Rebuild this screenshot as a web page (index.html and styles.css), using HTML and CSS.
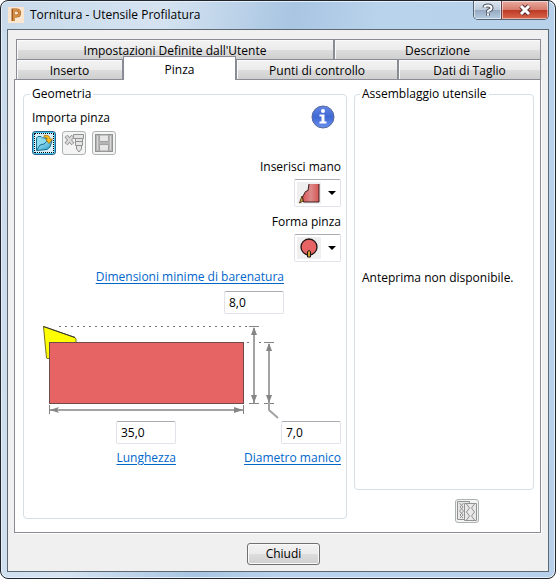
FILE: index.html
```html
<!DOCTYPE html>
<html lang="it">
<head>
    <meta charset="UTF-8">
    <meta name="viewport" content="width=device-width, initial-scale=1.0">
    <title>Tornitura - Utensile Profilatura</title>
    <link rel="stylesheet" href="styles.css">
</head>
<body>
    <div class="window">
        <header class="titlebar">
            <svg class="app-icon" width="16" height="16" viewBox="0 0 16 16" aria-hidden="true">
                <rect width="16" height="16" fill="#fde6d0"/>
                <path d="M5 14V3H8.500Q11.500 3 11.500 6T8.500 9H6" fill="none" stroke="#9a5a20" stroke-width="3"/>
                <path d="M6 14V3H8.500Q11.500 3 11.500 6T8.500 9H7" fill="none" stroke="#d58c40" stroke-width="2"/>
            </svg>
            <h1 class="title">Tornitura - Utensile Profilatura</h1>
            <div class="window-buttons">
                <button class="win-btn help" aria-label="Guida">
                    <svg width="12" height="14" viewBox="0 0 12 14">
                        <path d="M2.500 4.500Q2.500 2.500 6 2.500T9.500 5Q9.500 6.500 7.500 7.200T6 9.200M6 10.500V12.500" fill="none" stroke="#4b5563" stroke-width="4"/>
                        <path d="M2.500 4.500Q2.500 2.500 6 2.500T9.500 5Q9.500 6.500 7.500 7.200T6 9.200M6 10.500V12.500" fill="none" stroke="#fff" stroke-width="2"/>
                    </svg>
                </button>
                <button class="win-btn close" aria-label="Chiudi finestra">
                    <svg width="14" height="12" viewBox="0 0 14 12">
                        <path d="M3 2L11 10M11 2L3 10" stroke="#5a3038" stroke-width="5"/>
                        <path d="M3 2L11 10M11 2L3 10" stroke="#fff" stroke-width="3"/>
                    </svg>
                </button>
            </div>
        </header>

        <main class="client">
            <div class="tabs" role="tablist">
                <div class="tab-row tab-row-back">
                    <button class="tab" role="tab">Impostazioni Definite dall'Utente</button>
                    <button class="tab" role="tab">Descrizione</button>
                </div>
                <div class="tab-row tab-row-front">
                    <button class="tab" role="tab">Inserto</button>
                    <button class="tab active" role="tab" aria-selected="true">Pinza</button>
                    <button class="tab" role="tab">Punti di controllo</button>
                    <button class="tab" role="tab">Dati di Taglio</button>
                </div>
            </div>

            <div class="panel" role="tabpanel">
                <fieldset class="group geometry">
                    <legend>Geometria</legend>
                    <div class="import">
                        <div class="import-left">
                            <span>Importa pinza</span>
                            <div class="toolbar">
                                <button class="tool focused" aria-label="Apri">
                                    <svg width="20" height="20" viewBox="0 0 20 20">
                                        <defs>
                                            <linearGradient id="folder" x1="0" y1="0" x2="1" y2="1">
                                                <stop offset="0" stop-color="#c8f1fb"/>
                                                <stop offset="1" stop-color="#1b9cc8"/>
                                            </linearGradient>
                                        </defs>
                                        <path d="M2.500 17V5L4 3.500H7L8.500 5H12L13 8V16Z" fill="#8fdcf2" stroke="#176f91"/>
                                        <path d="M2.500 17.500L6 12L10 11L12.500 8.500L18 7.500L16 14L13 16.500Z" fill="url(#folder)" stroke="#176f91"/>
                                        <path d="M10 2.500Q16 1.500 16 6H18.500L15 10.500L11.500 6H13.500Q13.500 4 10 4Z" fill="#fbbd1d" stroke="#a66f00" stroke-width=".7"/>
                                    </svg>
                                </button>
                                <button class="tool" aria-label="Elimina" disabled>
                                    <svg width="20" height="20" viewBox="0 0 20 20">
                                        <path d="M2 3L9 11M9 3L2 11" stroke="#979797" stroke-width="4"/>
                                        <path d="M2.500 3.500L8.500 10.500M8.500 3.500L2.500 10.500" stroke="#ddd" stroke-width="2"/>
                                        <path d="M9.500 1.500H19.500V5.500H9.500ZM11.500 5.500H18.500V8.500H11.500ZM11.500 8.500H18.500V12.500H11.500ZM12.500 12.500H17.500V16L15 19L12.500 16Z" fill="#e4e4e4" stroke="#929292"/>
                                    </svg>
                                </button>
                                <button class="tool" aria-label="Salva" disabled>
                                    <svg width="20" height="20" viewBox="0 0 20 20">
                                        <rect x="1.500" y="1.500" width="17" height="17" fill="#b5b5b5" stroke="#929292"/>
                                        <path d="M5.500 2H14.500V8.500H5.500ZM5.500 11.500H14.500V18H5.500Z" fill="#e6e6e6" stroke="#a2a2a2"/>
                                        <path d="M3.500 3V17M16.500 3V17" stroke="#d8d8d8"/>
                                    </svg>
                                </button>
                            </div>
                        </div>
                        <button class="info" aria-label="Informazioni">
                            <svg width="24" height="24" viewBox="0 0 24 24">
                                <defs>
                                    <linearGradient id="ball" x1="0" y1="0" x2="0" y2="1">
                                        <stop offset="0" stop-color="#6487e6"/>
                                        <stop offset=".5" stop-color="#3f68d4"/>
                                        <stop offset="1" stop-color="#6a90ee"/>
                                    </linearGradient>
                                </defs>
                                <circle cx="12" cy="12" r="11" fill="url(#ball)" stroke="#56699c"/>
                                <circle cx="12" cy="6" r="2" fill="#fff"/>
                                <path d="M8.500 9.500H13.500V16.500H15.500V18.500H8.500V16.500H10.500V11.500H8.500Z" fill="#fff"/>
                            </svg>
                        </button>
                    </div>

                    <div class="pickers">
                        <label for="mano">Inserisci mano</label>
                        <div class="combo">
                            <svg width="24" height="22" viewBox="0 0 24 22" aria-hidden="true">
                                <defs>
                                    <linearGradient id="shank">
                                        <stop offset="0" stop-color="#d85454"/>
                                        <stop offset=".5" stop-color="#dc8a8a"/>
                                        <stop offset="1" stop-color="#d85454"/>
                                    </linearGradient>
                                </defs>
                                <rect width="24" height="22" fill="#efefef"/>
                                <path d="M2.500 21L5 14L7 18.500Z" fill="#d8a534" stroke="#54401a"/>
                                <path d="M12 2H22V20H6.500L5.500 15L8.500 9.500L11 8.500Z" fill="url(#shank)"/>
                                <path d="M22 2V20H6.500L5.500 15L8.500 9.500L11 8.500L12 2" fill="none" stroke="#3b2020"/>
                            </svg>
                            <select id="mano">
                                <option value="destra" aria-label="Destra"></option>
                                <option value="sinistra" aria-label="Sinistra"></option>
                            </select>
                        </div>
                        <label for="forma">Forma pinza</label>
                        <div class="combo">
                            <svg width="24" height="22" viewBox="0 0 24 22" aria-hidden="true">
                                <rect width="24" height="22" fill="#efefef"/>
                                <circle cx="12" cy="10" r="8" fill="#e66464" stroke="#1f1414" stroke-width="1.300"/>
                                <path d="M10.500 20V14.500Q12 12.500 13.500 14.500V20Z" fill="#d0a030" stroke="#1f1414"/>
                            </svg>
                            <select id="forma">
                                <option value="tonda" aria-label="Tonda"></option>
                                <option value="quadra" aria-label="Quadra"></option>
                            </select>
                        </div>
                    </div>

                    <div class="field field-top">
                        <a href="#barenatura" id="lbl-barenatura">Dimensioni minime di barenatura</a>
                        <input type="text" value="8,0" aria-labelledby="lbl-barenatura">
                    </div>

                    <svg class="diagram" viewBox="0 0 309 100" role="img" aria-label="Quote della pinza">
                        <path d="M11.500 6.500L43 17.500L44 19V23H18V38.500H15L14.500 38Z" fill="#ff0" stroke="#77741c"/>
                        <path d="M11.500 6.500L43 17.500" stroke="#333"/>
                        <rect x="17.500" y="22.500" width="194" height="61" fill="#e66464" stroke="#6f4a4a"/>
                        <path d="M27 6.500H216" stroke="#777" stroke-dasharray="2 4"/>
                        <path d="M215 22.500H229" stroke="#777" stroke-dasharray="2 4"/>
                        <g stroke="#858585">
                            <path d="M17.500 85V94M211.500 85V94"/>
                            <path d="M217 6.500H227M217 83.500H227"/>
                            <path d="M232 22.500H242M232 83.500H242"/>
                        </g>
                        <path d="M18 90H211M222 8V83M237 24V90L246 98" fill="none" stroke="#a3a3a3" stroke-width="2"/>
                        <g fill="#858585">
                            <path d="M18 90L27 87L25 90L27 93ZM211 90L202 87V93Z"/>
                            <path d="M222 7L219 15H225ZM222 83L219 75H225Z"/>
                            <path d="M237 23L234 31H240ZM237 83L234 75H240Z"/>
                        </g>
                    </svg>

                    <div class="bottom-fields">
                        <div class="field">
                            <input type="text" value="35,0" aria-labelledby="lbl-lunghezza">
                            <a href="#lunghezza" id="lbl-lunghezza">Lunghezza</a>
                        </div>
                        <div class="field">
                            <input type="text" value="7,0" aria-labelledby="lbl-diametro">
                            <a href="#diametro" id="lbl-diametro">Diametro manico</a>
                        </div>
                    </div>
                </fieldset>

                <div class="side">
                    <fieldset class="group preview">
                        <legend>Assemblaggio utensile</legend>
                        <p>Anteprima non disponibile.</p>
                    </fieldset>
                    <button class="tool compare" aria-label="Vista assemblaggio" disabled>
                        <svg width="20" height="20" viewBox="0 0 20 20">
                            <g fill="#e8e8e8" stroke="#929292">
                                <path d="M.5 .5H12.500V18.500H.5Z"/>
                                <path d="M2.500 2L6 6L2.500 10L6 14L3 17M6.500 2L3 6L6.500 10L3 14L6 17" fill="none"/>
                                <path d="M7.500 2.500H19.500V19.500H7.500Z"/>
                                <path d="M9.500 3L12.500 7L9.500 11L12.500 15L9.500 19M17.500 3L14.500 7L17.500 11L14.500 15L17.500 19" fill="none"/>
                            </g>
                        </svg>
                    </button>
                </div>
            </div>

            <footer class="actions">
                <button class="push">Chiudi</button>
            </footer>
        </main>
    </div>
</body>
</html>
```
FILE: styles.css
```css
* {
    box-sizing: border-box;
}
body {
    margin: 0;
    background-color: #fff;
    font-family: "Open Sans", "Noto Sans", sans-serif;
    font-size: 12px;
    line-height: 16px;
    color: #000;
}
button, input, select {
    font: inherit;
    color: inherit;
}
svg {
    display: block;
}
.window {
    display: flex;
    flex-direction: column;
    min-height: 100vh;
    padding: 0 6px 6px;
    border: 1px solid #20262c;
    border-radius: 8px;
    background: linear-gradient(100deg, #c9daea 0, #d5e3f1 25%, #a8c5e2 45%, #bad3ec 58%, #b7d1ea 100%);
    box-shadow: inset 0 0 0 1px #e4eff9;
}

/* title bar */
.titlebar {
    display: flex;
    align-items: flex-start;
    height: 28px;
}
.app-icon {
    margin: 6px 6px 0 1px;
}
.title {
    flex: 1;
    margin: 6px 0 0;
    font-size: 12px;
    font-weight: normal;
}
.window-buttons {
    display: flex;
    border: 1px solid #566373;
    border-top: none;
    border-radius: 0 0 5px 5px;
    overflow: hidden;
}
.win-btn {
    display: flex;
    align-items: center;
    justify-content: center;
    height: 18px;
    padding: 0;
    border: none;
    box-shadow: inset 0 0 0 1px rgba(255, 255, 255, 0.5);
}
.help {
    width: 27px;
    background: linear-gradient(#dbe5f0, #bccbdc 48%, #95a9c0 52%, #b7cde4);
}
.close {
    width: 47px;
    border-left: 1px solid #6a4048;
    background: linear-gradient(#e9aba0, #d77b6b 48%, #bd3a26 52%, #d9684c);
}

/* client area */
.client {
    flex: 1;
    display: flex;
    flex-direction: column;
    padding: 9px 7px 6px 6px;
    border: 1px solid #5d6873;
    background-color: #f0f0f0;
}
.tabs {
    padding-left: 2px;
}
.tab-row {
    display: grid;
    height: 20px;
}
.tab-row-back {
    grid-template-columns: 318fr 207fr;
}
.tab-row-front {
    grid-template-columns: 107fr 113fr 162fr 143fr;
}
.tab {
    padding: 3px 0 0;
    border: 1px solid #898c95;
    border-bottom: none;
    background: linear-gradient(#f3f3f3, #ebebeb 50%, #dddddd 52%, #cfcfcf);
    box-shadow: inset 1px 1px 0 #fafafa;
}
.tab.active {
    z-index: 1;
    margin: -3px 0 -1px;
    background: #fff;
}
.panel {
    flex: 1;
    display: grid;
    grid-template-columns: 324fr 180fr;
    column-gap: 7px;
    padding: 6px 6px 9px 8px;
    border: 1px solid #898c95;
    background-color: #fff;
    box-shadow: 1px 1px 0 #fff;
}
.group {
    min-width: 0;
    margin: 0;
    border: 1px solid #d5dfe5;
    border-radius: 4px;
}
.group legend {
    margin-left: -2px;
    padding: 0 2px;
}

/* geometry */
.geometry {
    margin-bottom: 4px;
    padding: 8px 5px 0 8px;
}
.import {
    display: flex;
    justify-content: space-between;
    align-items: flex-start;
}
.import-left, .toolbar {
    display: flex;
}
.import-left {
    flex-direction: column;
    gap: 5px;
}
.toolbar {
    gap: 6px;
}
.tool {
    width: 24px;
    height: 24px;
    padding: 1px;
    border: 1px solid #adb2b5;
    border-radius: 3px;
    background-color: #f4f4f4;
}
.tool.focused {
    border: 1px solid #2c628b;
    background-color: #d9f0fa;
    box-shadow: inset 0 0 0 1px #48c8f0;
    outline: 1px dotted #000;
    outline-offset: -3px;
}
.info {
    margin: -5px 6px 0 0;
    padding: 0;
    border: none;
    background: none;
}
.pickers {
    display: flex;
    flex-direction: column;
    align-items: flex-end;
    margin-top: 4px;
}
.combo {
    display: grid;
    width: 47px;
    height: 28px;
    margin: 4px 0 7px;
    border: 1px solid #e2e3ea;
    border-top-color: #abadb3;
    border-radius: 2px;
}
.combo svg, .combo select {
    grid-area: 1 / 1;
}
.combo svg {
    margin: 2px;
}
.combo select {
    width: 100%;
    appearance: none;
    border: none;
    background: url("data:image/svg+xml,%3Csvg xmlns='http://www.w3.org/2000/svg' width='8' height='4'%3E%3Cpath d='M0 0H8L4 4Z'/%3E%3C/svg%3E") no-repeat right 4px center;
}
.field {
    display: flex;
    flex-direction: column;
    align-items: flex-end;
    gap: 6px;
}
.field-top {
    padding-right: 57px;
}
.field input {
    width: 60px;
    height: 23px;
    padding: 0 4px;
    border: 1px solid #e2e3ea;
    border-top-color: #abadb3;
    border-radius: 2px;
    background-color: #fff;
}
a {
    color: #0066cc;
    text-underline-offset: 2px;
}
.diagram {
    width: 100%;
    margin-top: 6px;
}
.bottom-fields {
    display: grid;
    grid-template-columns: 144fr 165fr;
    margin-top: 1px;
}

/* tool assembly */
.side {
    display: flex;
    flex-direction: column;
    gap: 9px;
}
.preview {
    flex: 1;
    padding: 0 7px;
}
.preview p {
    margin: 168px 0 0;
}
.compare {
    align-self: flex-end;
    margin-right: 55px;
}
.actions {
    display: flex;
    justify-content: center;
    padding: 10px 0 0 12px;
}
.push {
    width: 73px;
    height: 22px;
    padding: 0;
    border: 1px solid #707070;
    border-radius: 3px;
    background: linear-gradient(#f2f2f2, #ebebeb 50%, #dddddd 52%, #cfcfcf);
    box-shadow: inset 0 0 0 1px #fafafa;
}
```
